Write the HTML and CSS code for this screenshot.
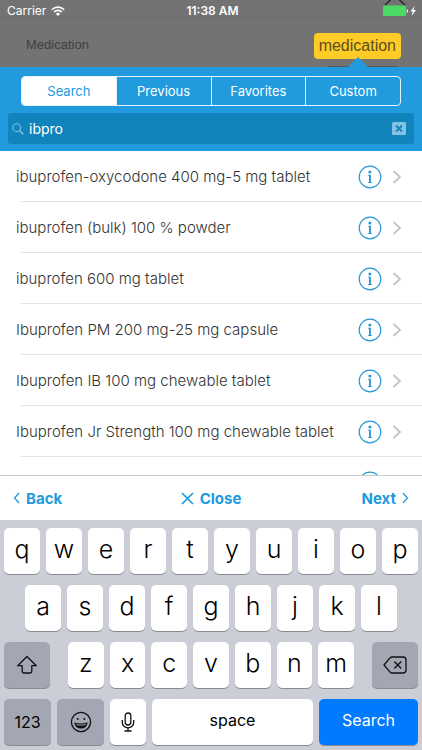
FILE: index.html
```html
<!DOCTYPE html>
<html lang="en">
<head>
    <meta charset="UTF-8">
    <meta name="viewport" content="width=device-width, initial-scale=1.0">
    <title>Medication</title>
    <link rel="stylesheet" href="styles.css">
</head>
<body>
    <!-- shared icons -->
    <svg class="sprite" aria-hidden="true">
        <symbol id="chevron" viewBox="0 0 10 16">
            <path d="M1.5 2L8 8l-6.5 6" fill="none" stroke="currentColor" stroke-width="1.8"/>
        </symbol>
        <symbol id="info" viewBox="0 0 24 24">
            <circle cx="12" cy="12" r="10.8" fill="none" stroke="currentColor" stroke-width="1.2"/>
            <circle cx="11.9" cy="6.9" r="1.5" fill="currentColor"/>
            <path d="M9.9 9.8h3v7.300l1.200.3v.7H9.800v-.7l1.200-.3v-6.300l-1.100-.4z" fill="currentColor"/>
        </symbol>
    </svg>

    <header class="status-bar">
        <div class="status-left">
            <span>Carrier</span>
            <svg width="14" height="10" viewBox="0 0 14 10">
                <g fill="none" stroke="#fff" stroke-width="1.6">
                    <path d="M.8 3.7a8.8 8.8 0 0 1 12.4 0"/>
                    <path d="M3.1 6a5.6 5.6 0 0 1 7.8 0"/>
                </g>
                <path d="M4.8 7.7a3.2 3.2 0 0 1 4.4 0L7 10z" fill="#fff"/>
            </svg>
        </div>
        <span class="status-time">11:38 AM</span>
        <div class="status-right">
            <svg width="36" height="17" viewBox="0 0 36 17">
                <path d="M3 5L9.500-1M16.500-1L23 5" fill="none" stroke="#222" stroke-width="1.3"/>
                <rect x="1" y="5.500" width="23" height="10.500" rx="1.500" fill="#4cd964"/>
                <path d="M24.800 9c1.500.3 1.500 3.700 0 4z" fill="#fff"/>
                <path d="M32.500 6l-4 5.500h2.300L29.500 16l4.500-6h-2.400z" fill="#fff"/>
            </svg>
        </div>
    </header>

    <div class="field-row">
        <span class="field-label">Medication</span>
        <button class="field-tag">medication</button>
    </div>

    <section class="search-panel">
        <div class="segments">
            <button class="segment active">Search</button>
            <button class="segment">Previous</button>
            <button class="segment">Favorites</button>
            <button class="segment">Custom</button>
        </div>
        <div class="search-box">
            <svg width="12" height="12" viewBox="0 0 12 12" fill="none" stroke="#7cc3ec" stroke-width="1.1">
                <circle cx="4.700" cy="4.700" r="3.900"/>
                <path d="M7.500 7.500l3.800 3.800" stroke-width="1.500"/>
            </svg>
            <input type="text" value="ibpro" aria-label="Search medications">
            <button class="clear" aria-label="Clear">
                <svg width="14" height="13" viewBox="0 0 14 13">
                    <rect width="14" height="13" rx="1.500" fill="#84c3e4"/>
                    <path d="M4 3.500l6 6M10 3.500l-6 6" stroke="#1184bb" stroke-width="1.800"/>
                </svg>
            </button>
        </div>
    </section>

    <ul class="results">
        <li class="result">
            <span class="result-name">ibuprofen-oxycodone 400 mg-5 mg tablet</span>
            <button class="info" aria-label="Info"><svg width="24" height="24"><use href="#info"/></svg></button>
            <svg class="chevron" width="10" height="16"><use href="#chevron"/></svg>
        </li>
        <li class="result">
            <span class="result-name">ibuprofen (bulk) 100 % powder</span>
            <button class="info" aria-label="Info"><svg width="24" height="24"><use href="#info"/></svg></button>
            <svg class="chevron" width="10" height="16"><use href="#chevron"/></svg>
        </li>
        <li class="result">
            <span class="result-name">ibuprofen 600 mg tablet</span>
            <button class="info" aria-label="Info"><svg width="24" height="24"><use href="#info"/></svg></button>
            <svg class="chevron" width="10" height="16"><use href="#chevron"/></svg>
        </li>
        <li class="result">
            <span class="result-name">Ibuprofen PM 200 mg-25 mg capsule</span>
            <button class="info" aria-label="Info"><svg width="24" height="24"><use href="#info"/></svg></button>
            <svg class="chevron" width="10" height="16"><use href="#chevron"/></svg>
        </li>
        <li class="result">
            <span class="result-name">Ibuprofen IB 100 mg chewable tablet</span>
            <button class="info" aria-label="Info"><svg width="24" height="24"><use href="#info"/></svg></button>
            <svg class="chevron" width="10" height="16"><use href="#chevron"/></svg>
        </li>
        <li class="result">
            <span class="result-name">Ibuprofen Jr Strength 100 mg chewable tablet</span>
            <button class="info" aria-label="Info"><svg width="24" height="24"><use href="#info"/></svg></button>
            <svg class="chevron" width="10" height="16"><use href="#chevron"/></svg>
        </li>
        <li class="result">
            <span class="result-name"></span>
            <button class="info" aria-label="Info"><svg width="24" height="24"><use href="#info"/></svg></button>
            <svg class="chevron" width="10" height="16"><use href="#chevron"/></svg>
        </li>
    </ul>

    <nav class="toolbar">
        <button class="tool">
            <svg width="7" height="12" viewBox="0 0 7 12"><path d="M6 1L1.500 6 6 11" fill="none" stroke="currentColor" stroke-width="1.300"/></svg>
            Back
        </button>
        <button class="tool">
            <svg width="13" height="13" viewBox="0 0 13 13"><path d="M1 1l11 11M12 1L1 12" stroke="currentColor" stroke-width="1.700"/></svg>
            Close
        </button>
        <button class="tool tool-next">
            Next
            <svg width="7" height="12" viewBox="0 0 7 12"><path d="M1 1l4.500 5L1 11" fill="none" stroke="currentColor" stroke-width="1.300"/></svg>
        </button>
    </nav>

    <div class="keyboard">
        <div class="key-row">
            <button class="key">q</button>
            <button class="key">w</button>
            <button class="key">e</button>
            <button class="key">r</button>
            <button class="key">t</button>
            <button class="key">y</button>
            <button class="key">u</button>
            <button class="key">i</button>
            <button class="key">o</button>
            <button class="key">p</button>
        </div>
        <div class="key-row key-row-middle">
            <button class="key">a</button>
            <button class="key">s</button>
            <button class="key">d</button>
            <button class="key">f</button>
            <button class="key">g</button>
            <button class="key">h</button>
            <button class="key">j</button>
            <button class="key">k</button>
            <button class="key">l</button>
        </div>
        <div class="key-row">
            <button class="key key-dark key-shift" aria-label="Shift">
                <svg width="22" height="20" viewBox="0 0 22 20"><path d="M11 1.500L1.700 10.700h4.500v5.600q0 1.700 1.700 1.700h6.200q1.700 0 1.700-1.700v-5.600h4.500z" fill="none" stroke="#111" stroke-width="1.300" stroke-linejoin="round"/></svg>
            </button>
            <button class="key">z</button>
            <button class="key">x</button>
            <button class="key">c</button>
            <button class="key">v</button>
            <button class="key">b</button>
            <button class="key">n</button>
            <button class="key">m</button>
            <button class="key key-dark key-delete" aria-label="Delete">
                <svg width="24" height="18" viewBox="0 0 24 18" fill="none" stroke="#111" stroke-width="1.300" stroke-linejoin="round">
                    <path d="M9 1h11q3 0 3 3v10q0 3-3 3H9q-1 0-1.700-.7L1 9l6.300-7.300Q8 1 9 1z"/>
                    <path d="M11.300 5.500l7 7M18.300 5.500l-7 7"/>
                </svg>
            </button>
        </div>
        <div class="key-row">
            <button class="key key-dark key-small">123</button>
            <button class="key key-dark key-small" aria-label="Emoji">
                <svg width="22" height="22" viewBox="0 0 22 22">
                    <circle cx="11" cy="11" r="9.600" fill="none" stroke="#111" stroke-width="1.300"/>
                    <circle cx="7.700" cy="8" r="1" fill="#111"/>
                    <circle cx="14.300" cy="8" r="1" fill="#111"/>
                    <path d="M4.300 11.500q6.700 2 13.400 0-.8 6-6.700 6t-6.700-6z" fill="#111"/>
                    <path d="M5.800 12.900q5.200 1.300 10.400 0l-.6 1.200q-4.600 1-9.200 0z" fill="#a2a7b3"/>
                </svg>
            </button>
            <button class="key key-mic" aria-label="Dictate">
                <svg width="14" height="20" viewBox="0 0 14 20" fill="none" stroke="#111" stroke-width="1.300">
                    <rect x="4.200" y="1" width="5.600" height="12" rx="2.800"/>
                    <path d="M1.300 8v2.500a5.700 5.300 0 0 0 11.400 0V8M7 16v3M3.500 19h7"/>
                </svg>
            </button>
            <button class="key key-space">space</button>
            <button class="key key-search">Search</button>
        </div>
    </div>
</body>
</html>
```
FILE: styles.css
```css
* {
    box-sizing: border-box;
}
body {
    margin: 0;
    height: 100vh;
    display: flex;
    flex-direction: column;
    font-family: Inter, "Liberation Sans", sans-serif;
    background: #fff;
    overflow: hidden;
}
button {
    border: none;
    padding: 0;
    background: none;
    font: inherit;
    color: inherit;
    cursor: pointer;
}
svg {
    display: block;
    flex: none;
}
.sprite {
    position: absolute;
    width: 0;
    height: 0;
}
.status-bar {
    display: flex;
    align-items: flex-end;
    height: 18px;
    padding: 0 4px 0 7px;
    background: #737373;
    border-bottom: 1px solid #6c6c6c;
    color: #fff;
    font-size: 12px;
    line-height: 12px;
}
.status-left, .status-right {
    flex: 1;
    display: flex;
    align-items: center;
    gap: 5px;
}
.status-right {
    justify-content: flex-end;
}
.status-time {
    font-weight: 600;
}
.field-row {
    display: flex;
    align-items: center;
    justify-content: space-between;
    height: 49px;
    padding: 6px 21px 0 26px;
    /* underline below the tag */
    background: linear-gradient(#585858, #585858) right 24px bottom / 70px 1px no-repeat #737373;
    font-family: "Liberation Sans", Arial, sans-serif;
}
.field-label {
    align-self: flex-start;
    margin-top: 13px;
    font-size: 13px;
    line-height: 15px;
    color: #404040;
}
.field-tag {
    height: 26px;
    padding: 0 5px;
    border-radius: 4px;
    background: #ffcb27;
    color: #5c4f1c;
    font-size: 16px;
}
.search-panel {
    position: relative;
    padding: 9px 8px 7px;
    background: #219ade;
}
/* arrow pointing at the tag */
.search-panel::before {
    content: "";
    position: absolute;
    top: -10px;
    right: 54px;
    border: 10px solid transparent;
    border-top: none;
    border-bottom-color: #219ade;
}
.segments {
    display: flex;
    height: 30px;
    margin: 0 13px 7px;
    border: 1px solid #e6f5fd;
    border-radius: 4px;
    overflow: hidden;
}
.segment {
    flex: 1;
    color: #fff;
    font-size: 13px;
}
.segment + .segment {
    border-left: 1px solid #e6f5fd;
}
.segment.active {
    background: #fff;
    color: #219ade;
}
.search-box {
    display: flex;
    align-items: center;
    gap: 5px;
    height: 31px;
    padding: 0 8px 0 4px;
    border-radius: 3px;
    background: #1184bb;
}
.search-box input {
    flex: 1;
    min-width: 0;
    border: none;
    outline: none;
    padding: 0;
    background: none;
    color: #fff;
    font: inherit;
    font-size: 14px;
}
.results {
    flex: 1;
    min-height: 0;
    margin: 0;
    padding: 0;
    list-style: none;
    overflow: hidden;
}
.result {
    display: flex;
    align-items: center;
    height: 51px;
    padding: 0 20px 0 16px;
    background: linear-gradient(#e4e4e4, #e4e4e4) 21px 100% / 100% 1px no-repeat;
}
.result-name {
    flex: 1;
    color: #333;
    font-size: 15px;
    font-weight: 300;
    white-space: nowrap;
}
.info {
    color: #2b98d5;
}
.chevron {
    margin-left: 10px;
    color: #c4c4c8;
}
.toolbar {
    display: grid;
    grid-template-columns: 1fr auto 1fr;
    align-items: center;
    height: 45px;
    padding: 0 13px;
    border-top: 1px solid #ccc;
    background: #fff;
    color: #219ade;
    font-size: 15px;
    font-weight: 700;
}
.tool {
    display: flex;
    align-items: center;
    gap: 6px;
}
.tool-next {
    justify-content: flex-end;
}
.keyboard {
    display: flex;
    flex-direction: column;
    gap: 11px;
    padding: 8px 4px 5px;
    background: #cbced6;
}
.key-row {
    display: flex;
    gap: 6px;
}
.key-row-middle {
    padding: 0 21px;
}
.key {
    flex: 1;
    display: flex;
    align-items: center;
    justify-content: center;
    height: 46px;
    padding-bottom: 4px;
    border-radius: 5px;
    background: #fff;
    box-shadow: 0 1px 0 #898c92;
    color: #000;
    font-size: 25px;
    font-weight: 300;
}
.key-dark {
    padding-bottom: 0;
    background: #a2a7b3;
}
.key-shift, .key-delete {
    flex: none;
    width: 46px;
}
.key-shift {
    margin-right: 12px;
}
.key-delete {
    margin-left: 12px;
}
.key-small {
    flex: none;
    width: 47px;
    font-size: 16px;
    font-weight: 400;
}
.key-mic {
    flex: none;
    width: 36px;
    padding-bottom: 0;
}
.key-space {
    font-size: 16px;
    font-weight: 400;
}
.key-search {
    flex: none;
    width: 99px;
    background: #007aff;
    color: #fff;
    font-size: 16px;
    font-weight: 400;
}
```
